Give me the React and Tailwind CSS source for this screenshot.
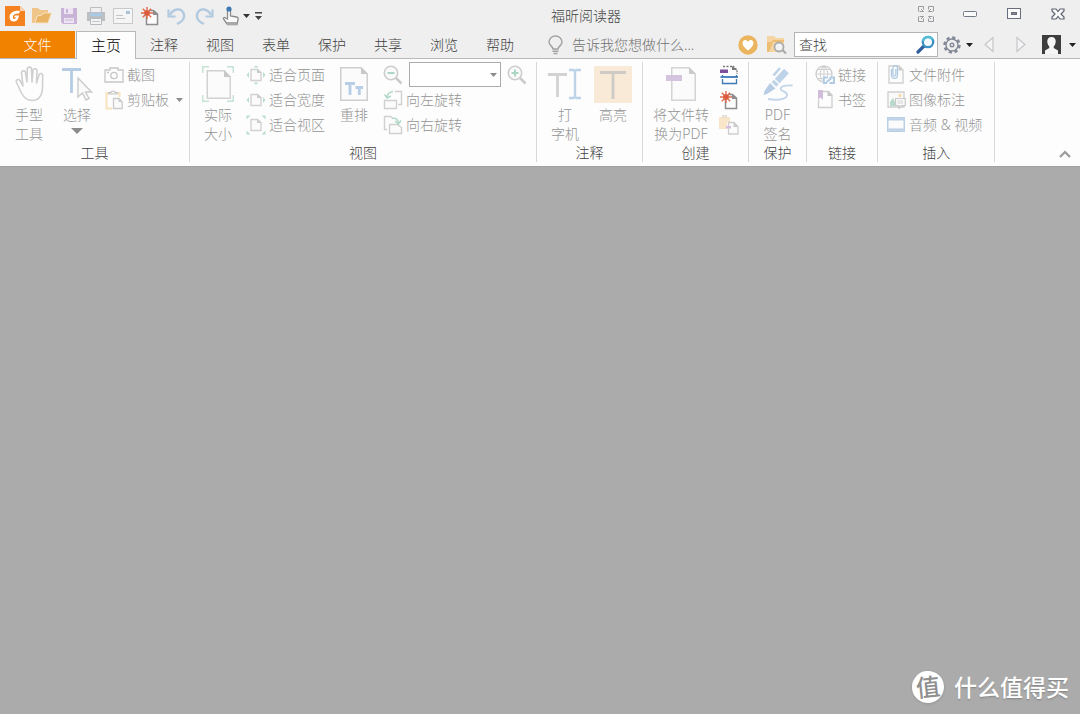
import { useState } from "react";

/* ---------- quick access icons ---------- */

const LogoIcon = () => (
  <svg width="20" height="20" viewBox="0 0 20 20">
    <path d="M0 0H15L20 5V20H0Z" fill="#f58220" />
    <path d="M15 0L20 5H15Z" fill="#fbd3b0" />
    <path d="M15 5C9 4 4.500 7 4.500 11C4.500 14.500 7 16 9.500 15.500C12.500 15 13.500 12.500 14 9.500H10L9 11.300H11C10.500 13.300 7.800 13.800 7.800 11.200C7.800 8.500 10.500 7.300 14 7.500Z" fill="#fff" />
  </svg>
);

const OpenIcon = () => (
  <svg width="20" height="18" viewBox="0 0 20 18">
    <path d="M0 1H6L8 3H16V16H0Z" fill="#f0c58a" />
    <path d="M3 16L5 9L10 8L12 6H19.500L16 16Z" fill="#e9b565" stroke="#f5e3c6" />
  </svg>
);

const SaveIcon = () => (
  <svg width="18" height="18" viewBox="0 0 18 18">
    <path d="M1 1H17V17H3L1 15Z" fill="#c9b3d6" />
    <path d="M4 1H13V7H4Z" fill="#eee5f2" />
    <path d="M6 2H8V6H6Z" fill="#c9b3d6" />
    <path d="M4 11H14V16H4Z" fill="#eee5f2" />
    <path d="M5 13H13" stroke="#c9b3d6" />
  </svg>
);

const PrintIcon = () => (
  <svg width="20" height="20" viewBox="0 0 20 20" fill="none">
    <path d="M4.500 6V1.500H15.500V6" stroke="#bbbfc4" />
    <path d="M1 6H19V15H1Z" fill="#bbbfc4" />
    <path d="M4 7H16V10H4Z" fill="#a9c8e2" />
    <path d="M4.500 12.500H15.500V18.500H4.500Z" fill="#f4f4f4" stroke="#b5bac0" />
    <path d="M6 15.500H14" stroke="#c3c7cc" />
  </svg>
);

const MailIcon = () => (
  <svg width="20" height="16" viewBox="0 0 20 16" fill="none">
    <path d="M.5 .5H19.500V15.500H.5Z" fill="#f5f5f5" stroke="#c8c8c8" />
    <path d="M13 3H17V6H13Z" fill="#a9c2d9" />
    <path d="M3 7.500H10M3 10.500H12" stroke="#c4c4c4" />
  </svg>
);

const NewPageIcon = () => (
  <svg width="20" height="20" viewBox="0 0 20 20" fill="none">
    <path d="M6.500 9V18.500H17.500V8L13.500 4.500H9" fill="#fcfcfc" stroke="#8d8d8d" strokeWidth="1.500" />
    <path d="M13 4V9H18Z" fill="#8d8d8d" />
    <path d="M7 1V13M1 7H13M2.800 2.800L11.200 11.200M11.200 2.800L2.800 11.200" stroke="#df6a4e" strokeWidth="1.400" />
    <circle cx="7" cy="7" r="2.800" fill="#dd5b3d" />
  </svg>
);

const UndoIcon = ({ flip }) => (
  <svg width="20" height="20" viewBox="0 0 20 20" fill="none" className={flip ? "-scale-x-100" : ""}>
    <path d="M3 9C6 2.500 14 1.500 16.500 7C18.500 12 15 16 10 18" stroke="#b2cae0" strokeWidth="2.400" />
    <path d="M1.500 3.500V10.500H8.500" stroke="#b2cae0" strokeWidth="2.200" />
  </svg>
);

const TouchIcon = () => (
  <svg width="18" height="20" viewBox="0 0 18 20" fill="none">
    <path d="M5.500 13V4C5.500 2.500 8.500 2.500 8.500 4V10L14.500 11C16 11.300 16.500 12 16 13.500L15 18.500H5.500L1.500 13C1 11.500 2.500 11 3.500 12Z" fill="#fafafa" stroke="#8b8b8b" strokeWidth="1.300" />
    <path d="M5 16H15V19H5Z" fill="#a8a8a8" />
    <circle cx="7" cy="3" r="2.600" fill="#3f78b3" />
  </svg>
);

const Caret = ({ className = "" }) => (
  <svg width="7" height="4" viewBox="0 0 7 4" className={className} fill="currentColor">
    <path d="M0 0H7L3.500 4Z" />
  </svg>
);

/* ---------- window and toolbar icons ---------- */

const GridIcon = () => (
  <svg width="16" height="16" viewBox="0 0 16 16" fill="none" stroke="#9a9a9f">
    <path d="M.5 5.500V.5H5.500V3.500M1.500 5.500H5.500L3 3M10.500 3.500V.5H15.500V5.500M14.500 5.500H10.500L13 3M.5 10.500V15.500H5.500V12.500M1.500 10.500H5.500L3 13M10.500 12.500V15.500H15.500V10.500M14.500 10.500H10.500L13 13" />
  </svg>
);

const MinimizeIcon = () => (
  <svg width="14" height="6" viewBox="0 0 14 6" fill="none" stroke="#747987">
    <rect x=".5" y=".5" width="13" height="5" rx="1" fill="#fafafa" />
  </svg>
);

const RestoreIcon = () => (
  <svg width="14" height="11" viewBox="0 0 14 11" fill="none" stroke="#6a6f80">
    <rect x=".5" y=".5" width="13" height="10" fill="#fafafa" />
    <rect x="4.500" y="4.500" width="5" height="2" fill="#888" />
  </svg>
);

const CloseIcon = () => (
  <svg width="14" height="12" viewBox="0 0 14 12" fill="#fafafa" stroke="#5d6272" strokeWidth="1.200">
    <path d="M1 1H5L7 3.500L9 1H13V3L10 6L13 9V11H9L7 8.500L5 11H1V9L4 6L1 3Z" />
  </svg>
);

const BulbIcon = () => (
  <svg width="15" height="20" viewBox="0 0 15 20" fill="none" stroke="#a3a3a3" strokeWidth="1.500">
    <path d="M5 14C5 11.500 1 10.500 1 7C1 3.500 4 1 7.500 1S14 3.500 14 7C14 10.500 10 11.500 10 14Z" />
    <path d="M4.500 16.300H10.500M5.500 18.500H9.500" />
  </svg>
);

const HeartIcon = () => (
  <svg width="20" height="20" viewBox="0 0 20 20">
    <circle cx="10" cy="10" r="9.700" fill="#ebb45e" />
    <path d="M10 15.500C2.500 10.500 4 5 7.200 5C8.800 5 9.600 6 10 7C10.400 6 11.200 5 12.800 5C16 5 17.500 10.500 10 15.500Z" fill="#fff" />
  </svg>
);

const FolderSearchIcon = () => (
  <svg width="20" height="19" viewBox="0 0 20 19" fill="none">
    <path d="M0 1H7L9 3H17V17H0Z" fill="#f5d5a3" />
    <path d="M0 7H4L6 5H17V7H6L2 17H0Z" fill="#edbd74" />
    <circle cx="12" cy="12" r="4.500" fill="#f3f3f3" stroke="#ababab" strokeWidth="1.800" />
    <path d="M15.500 15L19 18.500" stroke="#ababab" strokeWidth="2.200" />
  </svg>
);

const SearchIcon = () => (
  <svg width="19" height="19" viewBox="0 0 19 19" fill="none">
    <path d="M8 11L2 17" stroke="#2f5f9c" strokeWidth="3.200" strokeLinecap="round" />
    <circle cx="12" cy="7" r="5.200" fill="#f4fbff" stroke="#3b93c4" strokeWidth="2.300" />
    <path d="M7 6A5.200 5.200 0 0 1 16.500 4.500" stroke="#55bdd8" strokeWidth="2.300" />
  </svg>
);

const GearIcon = () => (
  <svg width="18" height="18" viewBox="0 0 18 18" fill="none" stroke="#858a98" strokeWidth="1.400">
    <circle cx="9" cy="9" r="7.400" strokeWidth="2.600" strokeDasharray="3.200 2.600" />
    <circle cx="9" cy="9" r="6" />
    <circle cx="9" cy="9" r="1.800" />
  </svg>
);

const ArrowIcon = ({ flip }) => (
  <svg width="10" height="17" viewBox="0 0 10 17" fill="#f4f4f4" stroke="#c6c6ca" strokeWidth="1.200" className={flip ? "-scale-x-100" : ""}>
    <path d="M9 1.500V15.500L1 8.500Z" />
  </svg>
);

const AvatarIcon = () => (
  <svg width="19" height="19" viewBox="0 0 19 19">
    <path d="M0 0H19V19H0Z" fill="#3d3d3d" />
    <path d="M9.500 2C12.500 2 14 4 13.700 7C13.500 9 12.500 10.500 11.700 11.500V13L16 15.500V19H3V15.500L7.300 13V11.500C6.500 10.500 5.500 9 5.300 7C5 4 6.500 2 9.500 2Z" fill="#f5f5f5" />
  </svg>
);

/* ---------- ribbon icons ---------- */

const HandIcon = () => (
  <svg width="29" height="36" viewBox="0 0 29 36" fill="none" stroke="#d0d0d0" strokeWidth="1.600" strokeLinejoin="round">
    <path d="M8 20L6.500 7C6.200 4.500 10 4 10.500 6.500L12 16L12.300 3C12.500 .5 16.500 .5 16.500 3L17 16L18 4.500C18.200 2 22 2.300 22 5L21.500 17L24 9C25 6.500 28 7.500 27.700 10L27.500 22C27 30 23 34.500 17 34.500C11.500 34.500 8.500 31 6.500 27L1.500 16.500C.5 14 3.500 12.500 5 14.500Z" />
  </svg>
);

const SelectIcon = () => (
  <svg width="32" height="36" viewBox="0 0 32 36" fill="none">
    <path d="M1 3.500H20M10.500 3.500V27" stroke="#b5cce4" strokeWidth="2.800" />
    <path d="M17 12V31L21.500 27L25 34L28 32.500L24.500 26H30.500Z" fill="#fbfbfb" stroke="#cbcbcb" strokeWidth="1.400" />
  </svg>
);

const CameraIcon = () => (
  <svg width="20" height="16" viewBox="0 0 20 16" fill="none" stroke="#c6c6c6" strokeWidth="1.300">
    <path d="M1 3H6V1H14V3H19V15H1Z" />
    <circle cx="10" cy="8.500" r="3.200" />
    <path d="M3 5.500H5" />
  </svg>
);

const ClipboardIcon = () => (
  <svg width="18" height="20" viewBox="0 0 18 20" fill="none">
    <path d="M4 3H1.500V18.500H7M12 3H14.500V7" stroke="#f9e2bd" strokeWidth="2" />
    <path d="M4 4H12V2.500H10C10 .5 6 .5 6 2.500H4Z" stroke="#c0c0c0" strokeWidth="1.200" />
    <path d="M8.500 8.500H14L17.200 12V18.500H8.500Z" fill="#fafafa" stroke="#cbcbcb" strokeWidth="1.300" />
    <path d="M13.500 8V12H17.500Z" fill="#cbcbcb" />
  </svg>
);

const ActualSizeIcon = () => (
  <svg width="32" height="36" viewBox="0 0 32 36" fill="none">
    <path d="M.75 7V.75H7M25 .75H31.250V7M31.250 29V35.250H25M7 35.250H.75V29" stroke="#c6e3d6" strokeWidth="1.500" />
    <path d="M5.250 4.750H22L28.250 11V32.250H5.250Z" fill="#fbfbfb" stroke="#d2d2d2" strokeWidth="1.500" />
    <path d="M22 4V11H29Z" fill="#c8c8c8" />
  </svg>
);

const FitIcon = ({ mode }) => (
  <svg width="20" height="20" viewBox="0 0 20 20" fill="none">
    <path d="M5 4.500H11.500L15 7.500V15.500H5Z" fill="#fbfbfb" stroke="#d2d2d2" strokeWidth="1.400" />
    <path d="M11 4V8H15.500Z" fill="#cbcbcb" />
    {mode === "page" && <path d="M7.500 2.500L10 .5L12.500 2.500ZM7.500 17.500L10 19.500L12.500 17.500Z" fill="#b5dac9" />}
    {mode !== "area" && <path d="M3 7L.5 10L3 13ZM17 7L19.500 10L17 13Z" fill="#bcdecf" />}
    {mode === "area" && (
      <path d="M.5 4.500V.5H4.500ZM15.500 .5H19.500V4.500ZM19.500 15.500V19.500H15.500ZM4.500 19.500H.5V15.500Z" fill="#bcdecf" />
    )}
  </svg>
);

const ReflowIcon = () => (
  <svg width="28" height="34" viewBox="0 0 28 34" fill="none">
    <path d="M.75 .75H21L27.250 7V33.250H.75Z" fill="#fbfbfb" stroke="#cfcfcf" strokeWidth="1.500" />
    <path d="M21 0V7H28Z" fill="#c8c8c8" />
    <path d="M5 16.500H15M10 16.500V28M15.500 20.500H23M19.300 20.500V28" stroke="#b8cee6" strokeWidth="2.800" />
  </svg>
);

const ZoomIcon = ({ plus }) => (
  <svg width="20" height="20" viewBox="0 0 20 20" fill="none">
    <circle cx="8" cy="8" r="6.700" fill="#fafafa" stroke="#cdcdcd" strokeWidth="1.600" />
    <path d="M13 13L18.500 18.500" stroke="#cacaca" strokeWidth="2.500" />
    <path d={plus ? "M4.500 8H11.500M8 4.500V11.500" : "M4.500 8H11.500"} stroke="#acd6c4" strokeWidth="2" />
  </svg>
);

const RotateIcon = ({ right }) => (
  <svg width="20" height="20" viewBox="0 0 20 20" fill="none" strokeWidth="1.400">
    {right ? (
      <>
        <path d="M4 14.500H1.500V1.500H7.500L9.500 3" stroke="#d0d0d0" />
        <path d="M6.500 9.500H14L18.500 12.500V18.500H6.500Z" fill="#fbfbfb" stroke="#d0d0d0" />
        <path d="M9 3.500C13 2.500 15 4.500 15.500 8M12 6L15.500 9L18 5.500" stroke="#b3dac8" strokeWidth="1.600" />
      </>
    ) : (
      <>
        <path d="M12 1.500H18.500V14.500H15" stroke="#d0d0d0" />
        <path d="M1.500 10.500H13.500V18.500H1.500Z" fill="#fbfbfb" stroke="#d0d0d0" />
        <path d="M10 1.500C6 2 4.500 4 4 7M1.500 4.500L4 8L8 6" stroke="#b3dac8" strokeWidth="1.600" />
      </>
    )}
  </svg>
);

const TypewriterIcon = () => (
  <svg width="34" height="32" viewBox="0 0 34 32" fill="none">
    <path d="M0 6.500H19M9.500 6.500V29" stroke="#d2d2d2" strokeWidth="2.800" />
    <path d="M21 2H25.500L27 3L28.500 2H33M27 2V30M21 30H25.500L27 29L28.500 30H33" stroke="#bdd3e8" strokeWidth="2.400" />
  </svg>
);

const HighlightIcon = () => (
  <svg width="38" height="37" viewBox="0 0 38 37" fill="none">
    <path d="M0 0H38V37H0Z" fill="#f8ead6" />
    <path d="M6 6.500H32M19 6.500V33" stroke="#cecac6" strokeWidth="2.800" />
  </svg>
);

const ConvertIcon = () => (
  <svg width="30" height="34" viewBox="0 0 30 34" fill="none">
    <path d="M5.750 .75H23L29.250 7V33.250H5.750Z" fill="#fbfbfb" stroke="#d4d4d4" strokeWidth="1.500" />
    <path d="M23 0V7H30Z" fill="#cbcbcb" />
    <path d="M0 8H16V14H0Z" fill="#d4c4df" />
  </svg>
);

const ScanIcon = () => (
  <svg width="20" height="20" viewBox="0 0 20 20" fill="none">
    <path d="M4 1.500H14" stroke="#777" strokeWidth="1.400" strokeDasharray="2 1.500" />
    <path d="M14 1L18 5V9" stroke="#777" strokeWidth="1.300" strokeDasharray="2 1" />
    <path d="M13 1V5H18Z" fill="#777" />
    <path d="M1 4.500H9V8H1Z" fill="#7e4f9d" />
    <path d="M1.500 12H19" stroke="#3d79b8" strokeWidth="1.800" />
    <path d="M3.500 14V18.500H17.500V14M3.500 10V12M17.500 10V12" stroke="#3d79b8" strokeWidth="1.300" />
  </svg>
);

const PastePageIcon = () => (
  <svg width="20" height="20" viewBox="0 0 20 20" fill="none">
    <path d="M0 2H11V7H8V14H0Z" fill="#f9e6c9" />
    <path d="M3 0H8V3H3Z" fill="#e6e0d5" />
    <path d="M9.500 7.500H15L19 11.500V19H9.500Z" fill="#fbfbfb" stroke="#cecece" strokeWidth="1.300" />
    <path d="M14.500 7V12H19Z" fill="#cacaca" />
    <path d="M7 11H12V13.500H7Z" fill="#d2c0de" />
  </svg>
);

const SignIcon = () => (
  <svg width="30" height="34" viewBox="0 0 30 34" fill="none">
    <path d="M11 17.500L23.500 4" stroke="#bed3e8" strokeWidth="6.500" />
    <path d="M10.500 8.500L17 1" stroke="#bed3e8" strokeWidth="2.600" />
    <path d="M11 12L17.500 18" stroke="#fdfdfd" strokeWidth="1.200" />
    <path d="M7 16L12.500 21.500L4 27L.5 28L1.500 24Z" fill="#b6cde4" />
    <path d="M29.500 18.500C22 18 16.500 19.500 18 22.500C19.500 25 25 24.500 24 28.500C23 33 12 33.500 5 32" stroke="#c3d6ea" strokeWidth="1.900" />
  </svg>
);

const LinkIcon = () => (
  <svg width="20" height="20" viewBox="0 0 20 20" fill="none">
    <circle cx="9" cy="9" r="8" stroke="#cbcbcb" strokeWidth="1.300" />
    <path d="M9 1V17M1 9H17M3 4.500H15M3 13.500H15M9 1C4 5 4 13 9 17M9 1C14 5 14 13 9 17" stroke="#d2d2d2" strokeWidth="1.100" />
    <path d="M7.500 11.500H19.500V19H7.500Z" fill="#fdfdfd" />
    <path d="M13 12.500H8.800V18H12M14.500 12.500H19V18H14.500M11.500 17L16 13.500" stroke="#b0cae3" strokeWidth="1.900" />
  </svg>
);

const BookmarkIcon = () => (
  <svg width="16" height="19" viewBox="0 0 16 19" fill="none">
    <path d="M1.500 10V17.500H15V5L11.500 1.500H6" stroke="#d0d0d0" strokeWidth="1.400" />
    <path d="M10.500 1V6H15.500Z" fill="#c6c6c6" />
    <path d="M1 0H6V10L3.500 7.500L1 10Z" fill="#d0bddc" />
  </svg>
);

const AttachIcon = () => (
  <svg width="16" height="19" viewBox="0 0 16 19" fill="none">
    <path d="M1 1H11L15 5V18H1Z" stroke="#d0d0d0" strokeWidth="1.400" />
    <path d="M10.500 1V5.500H15Z" fill="#cacaca" />
    <path d="M3.500 4V10C3.500 14.500 9.500 14.500 9.500 10V3C9.500 -.5 5 -.5 5 3V9.500C5 11.500 7.800 11.500 7.800 9.500V4" stroke="#b0cae3" strokeWidth="1.300" />
  </svg>
);

const ImageNoteIcon = () => (
  <svg width="19" height="18" viewBox="0 0 19 18" fill="none">
    <path d="M1 1H17V16H1Z" fill="#fafafa" stroke="#cecece" strokeWidth="1.300" />
    <path d="M3 15V11L6 7L8 11V15Z" fill="#b8dacb" />
    <circle cx="13" cy="4.500" r="1.700" fill="#f7dbab" />
    <path d="M8.500 7.500H18.300V14.500H14.500L12 17.500V14.500H8.500Z" fill="#fafafa" stroke="#c9c9c9" strokeWidth="1.200" />
    <path d="M10.500 10H16M10.500 12H16" stroke="#d4d4d4" />
  </svg>
);

const VideoIcon = () => (
  <svg width="18" height="15" viewBox="0 0 18 15" fill="none">
    <path d="M0 0H18V15H0Z" fill="#b9cfe5" />
    <path d="M1.500 3.500H16.500V11.500H1.500Z" fill="#fbfbfb" />
    <path d="M1 1.800H18M1 13.300H18" stroke="#d5e2ef" strokeWidth="1" strokeDasharray="1.500 1.500" />
  </svg>
);

/* ---------- ribbon building blocks ---------- */

function Group({ label, className = "", children }) {
  return (
    <section aria-label={label} className="flex flex-col border-r border-[#d8d8d8]">
      <div className={`flex h-[82px] items-start ${className}`}>{children}</div>
      <h2 className="text-center leading-[18px] text-[#404040]">{label}</h2>
    </section>
  );
}

function BigButton({ icon, lines, width = "w-12", arrow }) {
  return (
    <button type="button" className={`flex flex-col items-center ${width}`}>
      <span className="-mb-px flex h-11 items-center justify-center">{icon}</span>
      {lines.map((line) => (
        <span key={line} className="leading-[19px] whitespace-nowrap">{line}</span>
      ))}
      {arrow && (
        <svg width="12" height="6" viewBox="0 0 12 6" fill="#8c8c8c" className="mt-1">
          <path d="M0 0H12L6 6Z" />
        </svg>
      )}
    </button>
  );
}

function SmallButton({ icon, label, arrow }) {
  return (
    <button type="button" className="flex h-[25px] items-center gap-[3px] leading-[18px] whitespace-nowrap">
      <span className="flex w-5 shrink-0 items-center justify-center">{icon}</span>
      {label}
      {arrow && <Caret className="ml-1 text-[#8c8c8c]" />}
    </button>
  );
}

function IconButton({ label, icon, className = "" }) {
  return (
    <button type="button" aria-label={label} className={`flex shrink-0 items-center justify-center ${className}`}>
      {icon}
    </button>
  );
}

const quickActions = [
  { label: "福昕", icon: <LogoIcon /> },
  { label: "打开", icon: <OpenIcon /> },
  { label: "保存", icon: <SaveIcon /> },
  { label: "打印", icon: <PrintIcon /> },
  { label: "邮件", icon: <MailIcon /> },
  { label: "新建", icon: <NewPageIcon /> },
  { label: "撤销", icon: <UndoIcon /> },
  { label: "重做", icon: <UndoIcon flip /> },
  { label: "触摸", icon: <TouchIcon /> },
];

const windowActions = [
  { label: "全屏", icon: <GridIcon /> },
  { label: "最小化", icon: <MinimizeIcon /> },
  { label: "还原", icon: <RestoreIcon /> },
  { label: "关闭", icon: <CloseIcon /> },
];

const tabs = ["主页", "注释", "视图", "表单", "保护", "共享", "浏览", "帮助"];

export default function App() {
  const [activeTab, setActiveTab] = useState("主页");

  return (
    <div className="flex min-h-screen flex-col bg-[#ababab] font-['Noto_Sans','Noto_Sans_CJK_SC',sans-serif] text-sm font-light text-[#404040]">
      {/* Title bar */}
      <header className="flex h-[31px] items-center bg-[#efefef] pl-px">
        {quickActions.map((action) => (
          <IconButton key={action.label} {...action} className="h-full w-[27px]" />
        ))}
        <IconButton label="触摸选项" icon={<Caret />} className="-ml-1 w-3 text-[#333]" />
        <IconButton
          label="自定义快速访问工具栏"
          className="w-3"
          icon={
            <svg width="7" height="8" viewBox="0 0 7 8" fill="#444">
              <path d="M0 0H7V1.500H0ZM0 4H7L3.500 8Z" />
            </svg>
          }
        />
        <h1 className="flex-1 pl-1 text-center whitespace-nowrap">福昕阅读器</h1>
        {windowActions.map((action) => (
          <IconButton key={action.label} {...action} className="mb-1 w-11" />
        ))}
      </header>

      {/* Tabs */}
      <div className="flex h-7 items-end border-b border-[#b9b9b9] bg-[#efefef]">
        <button type="button" className="mr-px h-[27px] w-[75px] bg-[#f08200] text-white">文件</button>
        <nav className="flex h-full items-end">
          {tabs.map((tab) => (
            <button
              key={tab}
              type="button"
              onClick={() => setActiveTab(tab)}
              className={
                activeTab === tab
                  ? "-mb-px h-7 w-[60px] border border-b-0 border-[#b9b9b9] bg-[#fdfdfd] text-[15px] text-black"
                  : "h-[27px] w-14"
              }
            >
              {tab}
            </button>
          ))}
        </nav>
        <label className="ml-5 flex h-[27px] flex-1 items-center gap-[9px]">
          <BulbIcon />
          <input
            type="text"
            aria-label="告诉我您想做什么"
            placeholder="告诉我您想做什么..."
            className="w-40 min-w-0 bg-transparent outline-none placeholder:text-[#707070]"
          />
        </label>
        <div className="flex h-[27px] items-center pr-1">
          <IconButton label="收藏" icon={<HeartIcon />} className="w-5" />
          <IconButton label="查找文件夹" icon={<FolderSearchIcon />} className="ml-[9px] w-5" />
          <div className="ml-[7px] flex h-[25px] w-36 items-center border border-[#b4b4b4] bg-white pr-0.5 pl-1">
            <input
              type="text"
              aria-label="查找"
              placeholder="查找"
              className="w-full min-w-0 outline-none placeholder:text-[#404040]"
            />
            <IconButton label="搜索" icon={<SearchIcon />} />
          </div>
          <IconButton label="设置" icon={<GearIcon />} className="ml-1 w-5" />
          <IconButton label="设置选项" icon={<Caret />} className="ml-[3px] w-2 text-[#222]" />
          <IconButton label="上一个" icon={<ArrowIcon />} className="ml-2.5 w-3" />
          <IconButton label="下一个" icon={<ArrowIcon flip />} className="ml-5 w-3" />
          <IconButton label="账户" icon={<AvatarIcon />} className="ml-3.5 w-5" />
          <IconButton label="账户选项" icon={<Caret />} className="ml-[7px] w-2 text-[#222]" />
        </div>
      </div>

      {/* Ribbon */}
      <div className="flex border-b border-[#a0a0a0] bg-[#fdfdfd] pt-[3px] pb-1 text-[#949494]">
        <Group label="工具" className="pr-1.5 pl-[5px]">
          <BigButton icon={<HandIcon />} lines={["手型", "工具"]} />
          <BigButton icon={<SelectIcon />} lines={["选择"]} arrow />
          <div className="ml-[3px] flex flex-col">
            <SmallButton icon={<CameraIcon />} label="截图" />
            <SmallButton icon={<ClipboardIcon />} label="剪贴板" arrow />
          </div>
        </Group>

        <Group label="视图" className="pr-[9px]">
          <BigButton icon={<ActualSizeIcon />} lines={["实际", "大小"]} width="w-14" />
          <div className="flex flex-col">
            <SmallButton icon={<FitIcon mode="page" />} label="适合页面" />
            <SmallButton icon={<FitIcon mode="width" />} label="适合宽度" />
            <SmallButton icon={<FitIcon mode="area" />} label="适合视区" />
          </div>
          <BigButton icon={<ReflowIcon />} lines={["重排"]} width="w-[58px]" />
          <div className="flex flex-col">
            <div className="flex h-[25px] items-center gap-1.5">
              <IconButton label="缩小" icon={<ZoomIcon />} className="w-5" />
              <div className="relative flex h-[25px] w-[92px] items-center">
                <select aria-label="缩放比例" className="h-full w-full appearance-none border border-[#ababab] bg-white px-1">
                  <option value=""></option>
                  <option>100%</option>
                  <option>150%</option>
                </select>
                <Caret className="pointer-events-none absolute right-1 text-[#8c8c8c]" />
              </div>
              <IconButton label="放大" icon={<ZoomIcon plus />} className="w-5" />
            </div>
            <SmallButton icon={<RotateIcon />} label="向左旋转" />
            <SmallButton icon={<RotateIcon right />} label="向右旋转" />
          </div>
        </Group>

        <Group label="注释" className="pr-[5px] pl-1">
          <BigButton icon={<TypewriterIcon />} lines={["打", "字机"]} />
          <BigButton icon={<HighlightIcon />} lines={["高亮"]} />
        </Group>

        <Group label="创建" className="pr-[9px] pl-1">
          <BigButton icon={<ConvertIcon />} lines={["将文件转", "换为PDF"]} width="w-[68px]" />
          <div className="ml-1 flex flex-col">
            <IconButton label="扫描" icon={<ScanIcon />} className="h-[25px] w-5" />
            <IconButton label="空白页" icon={<NewPageIcon />} className="h-[25px] w-5" />
            <IconButton label="从剪贴板" icon={<PastePageIcon />} className="h-[25px] w-5" />
          </div>
        </Group>

        <Group label="保护">
          <BigButton icon={<SignIcon />} lines={["PDF", "签名"]} width="w-[57px]" />
        </Group>

        <Group label="链接" className="pr-[11px] pl-2">
          <div className="flex flex-col">
            <SmallButton icon={<LinkIcon />} label="链接" />
            <SmallButton icon={<BookmarkIcon />} label="书签" />
          </div>
        </Group>

        <Group label="插入" className="pr-3 pl-2">
          <div className="flex flex-col">
            <SmallButton icon={<AttachIcon />} label="文件附件" />
            <SmallButton icon={<ImageNoteIcon />} label="图像标注" />
            <SmallButton icon={<VideoIcon />} label="音频 & 视频" />
          </div>
        </Group>

        <IconButton
          label="折叠功能区"
          className="mr-2 ml-auto h-4 w-3.5 self-end"
          icon={
            <svg width="12" height="8" viewBox="0 0 12 8" fill="none" stroke="#9a9a9a" strokeWidth="2.200">
              <path d="M1 7L6 2L11 7" />
            </svg>
          }
        />
      </div>

      {/* Document area */}
      <main className="flex flex-1 items-end justify-end pr-[11px] pb-[11px]">
        <div className="flex items-center gap-2.5 font-medium text-white">
          <span className="flex size-8 -rotate-6 items-center justify-center rounded-full bg-white text-2xl leading-8 text-[#8f8f8f] shadow-sm">
            值
          </span>
          <span className="text-[23px] leading-8 text-shadow-sm">什么值得买</span>
        </div>
      </main>
    </div>
  );
}
